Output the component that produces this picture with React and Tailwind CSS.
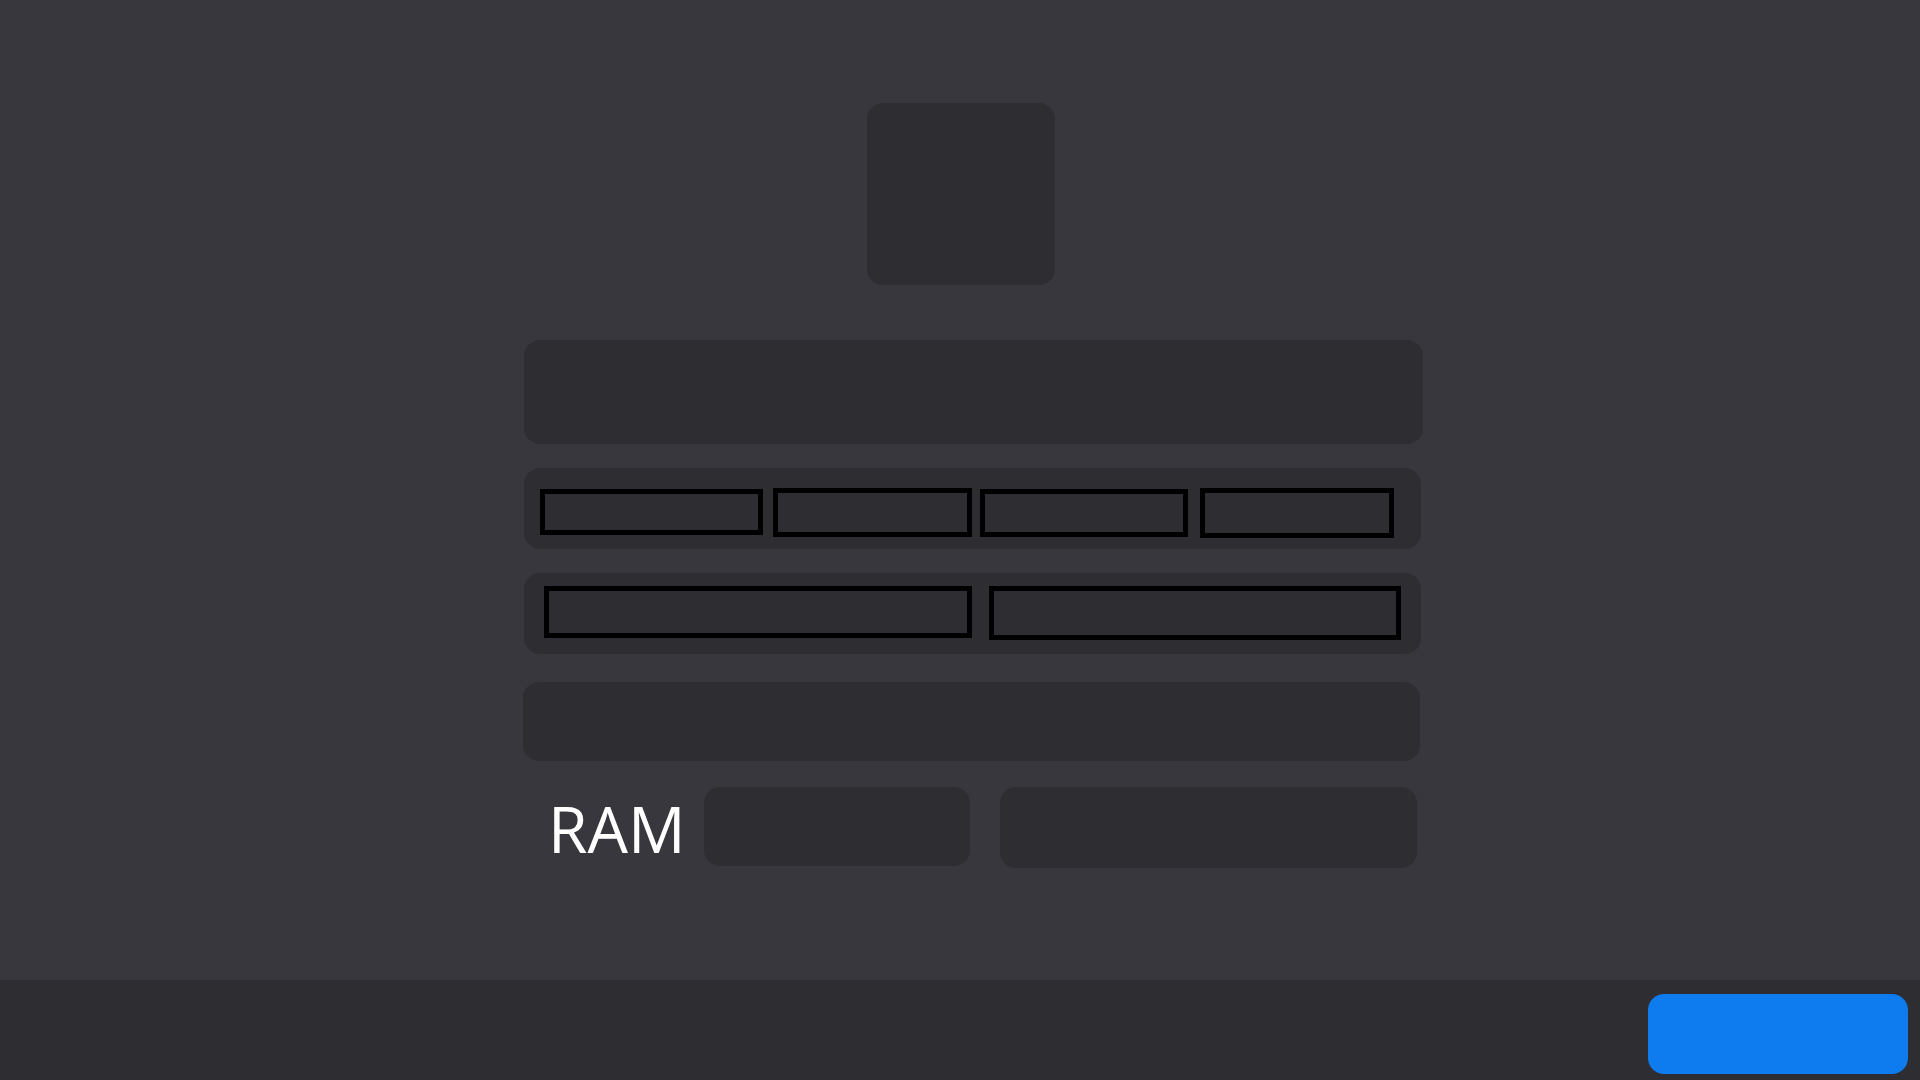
import React from "react";

export default function App() {
  const panel = "bg-[#2e2d32] rounded-2xl";
  const box = "border-[5px] border-black bg-[#2e2d32]";
  return (
    <div className="w-[1920px] h-[1080px] flex flex-col bg-[#38373d] overflow-hidden" style={{ fontFamily: '"Open Sans", "Noto Sans", sans-serif' }}>
      <div className="h-[980px] pt-[103px] pl-[523px] flex flex-col items-start">
        <div className={`ml-[344px] w-[188px] h-[182px] ${panel}`} />
        <div className={`mt-[55px] ml-[1px] w-[899px] h-[104px] ${panel}`} />
        <div className={`mt-[24px] ml-[1px] w-[897px] h-[81px] ${panel} flex items-start pl-[16px]`}>
          <div className={`mt-[21px] w-[223px] h-[46px] ${box}`} />
          <div className={`ml-[10px] mt-[20px] w-[199px] h-[49px] ${box}`} />
          <div className={`ml-[8px] mt-[21px] w-[208px] h-[48px] ${box}`} />
          <div className={`ml-[12px] mt-[20px] w-[194px] h-[50px] ${box}`} />
        </div>
        <div className={`mt-[24px] ml-[1px] w-[897px] h-[81px] ${panel} flex items-start pl-[20px]`}>
          <div className={`mt-[13px] w-[428px] h-[52px] ${box}`} />
          <div className={`ml-[17px] mt-[13px] w-[412px] h-[54px] ${box}`} />
        </div>
        <div className={`mt-[28px] w-[897px] h-[79px] ${panel}`} />
        <div className="mt-[26px] flex items-start">
          <div className="ml-[25px] w-[156px] mt-[10px] text-[64px] leading-[64px] text-white">RAM</div>
          <div className={`w-[266px] h-[79px] ${panel}`} />
          <div className={`ml-[30px] w-[417px] h-[81px] ${panel}`} />
        </div>
      </div>
      <div className="h-[100px] bg-[#2e2d32] flex justify-end items-start pt-[14px] pr-[12px]">
        <div className="w-[260px] h-[80px] rounded-2xl bg-[#0e7bef]" />
      </div>
    </div>
  );
}
